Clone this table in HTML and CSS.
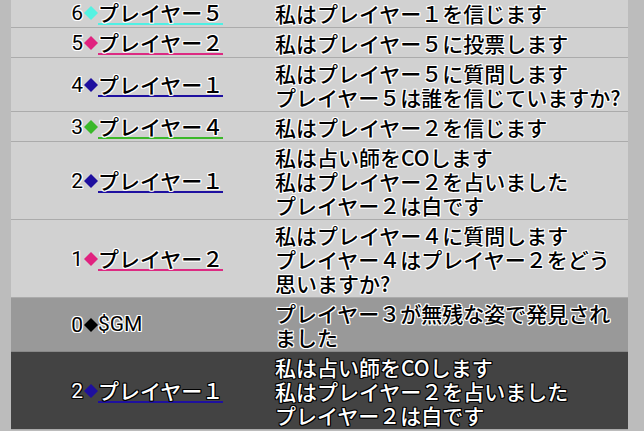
FILE: index.html
```html
<!DOCTYPE html>
<html lang="ja">
<head>
<meta charset="utf-8">
<link rel="stylesheet" href="styles.css">
</head>
<body>
<div class="log">
  <div class="row">
    <div class="who"><span class="num">6<span class="dia c-cyan"></span></span><span class="name u-cyan">プレイヤー５</span></div>
    <div class="msg">私はプレイヤー１を信じます</div>
  </div>
  <div class="row">
    <div class="who"><span class="num">5<span class="dia c-pink"></span></span><span class="name u-pink">プレイヤー２</span></div>
    <div class="msg">私はプレイヤー５に投票します</div>
  </div>
  <div class="row">
    <div class="who"><span class="num">4<span class="dia c-blue"></span></span><span class="name u-blue">プレイヤー１</span></div>
    <div class="msg">私はプレイヤー５に質問します<br>プレイヤー５は誰を信じていますか?</div>
  </div>
  <div class="row">
    <div class="who"><span class="num">3<span class="dia c-green"></span></span><span class="name u-green">プレイヤー４</span></div>
    <div class="msg">私はプレイヤー２を信じます</div>
  </div>
  <div class="row">
    <div class="who"><span class="num">2<span class="dia c-blue"></span></span><span class="name u-blue">プレイヤー１</span></div>
    <div class="msg">私は占い師をCOします<br>私はプレイヤー２を占いました<br>プレイヤー２は白です</div>
  </div>
  <div class="row">
    <div class="who"><span class="num">1<span class="dia c-pink"></span></span><span class="name u-pink">プレイヤー２</span></div>
    <div class="msg">私はプレイヤー４に質問します<br>プレイヤー４はプレイヤー２をどう思いますか?</div>
  </div>
  <div class="row gm">
    <div class="who"><span class="num">0<span class="dia c-black"></span></span><span class="name plain">$GM</span></div>
    <div class="msg">プレイヤー３が無残な姿で発見されました</div>
  </div>
  <div class="row dark">
    <div class="who"><span class="num">2<span class="dia c-blue"></span></span><span class="name u-blue">プレイヤー１</span></div>
    <div class="msg">私は占い師をCOします<br>私はプレイヤー２を占いました<br>プレイヤー２は白です</div>
  </div>
</div>
</body>
</html>
```

FILE: styles.css
```css
html, body {
  margin: 0;
  padding: 0;
  background: #bcbcbc;
  height: 100%;
  overflow: hidden;
}

.log {
  margin: -2px 16px 0 11px;
  font-family: "Noto Sans CJK JP", sans-serif;
  font-weight: 500;
  font-size: 21px;
  line-height: 24px;
  color: #000;
  text-shadow:
    1px 0 0 #fff, -1px 0 0 #fff, 0 1px 0 #fff, 0 -1px 0 #fff,
    1px 1px 0 #fff, -1px -1px 0 #fff, 1px -1px 0 #fff, -1px 1px 0 #fff;
}

.row {
  display: grid;
  grid-template-columns: 258px 1fr;
  background: #d1d1d1;
  border-bottom: 1px solid #ababab;
  padding: 3px 0 2px;
}

.row.gm {
  background: #999999;
  border-bottom-color: #888888;
}

.row.dark {
  background: #434343;
  color: #fff;
  text-shadow:
    1px 0 0 #000, -1px 0 0 #000, 0 1px 0 #000, 0 -1px 0 #000,
    1px 1px 0 #000, -1px -1px 0 #000, 1px -1px 0 #000, -1px 1px 0 #000;
}

.who {
  display: flex;
  align-items: center;
}

.num {
  width: 87px;
  height: 24px;
  display: flex;
  justify-content: flex-end;
  align-items: center;
  font-family: Roboto, sans-serif;
  font-weight: 400;
}

.dia {
  display: inline-block;
  width: 14px;
  height: 14px;
  margin-left: 1px;
  clip-path: polygon(50% 0, 100% 50%, 50% 100%, 0 50%);
}

.c-cyan { background: #55f2e2; }
.c-pink { background: #e0227f; }
.c-blue { background: #1e0f9e; }
.c-green { background: #3ab82a; }
.c-black { background: #000; }

.name {
  display: inline-block;
  box-sizing: border-box;
  height: 24px;
  line-height: 22px;
  border-bottom: 2px solid transparent;
}

.name.plain {
  font-family: Roboto, sans-serif;
  font-weight: 400;
  border-bottom-color: transparent;
}

.u-cyan { border-bottom-color: #4ff0e4; }
.u-pink { border-bottom-color: #dc2a82; }
.u-blue { border-bottom-color: #1e10a0; }
.u-green { border-bottom-color: #3cb82a; }

.msg {
  padding-left: 6px;
}
```
